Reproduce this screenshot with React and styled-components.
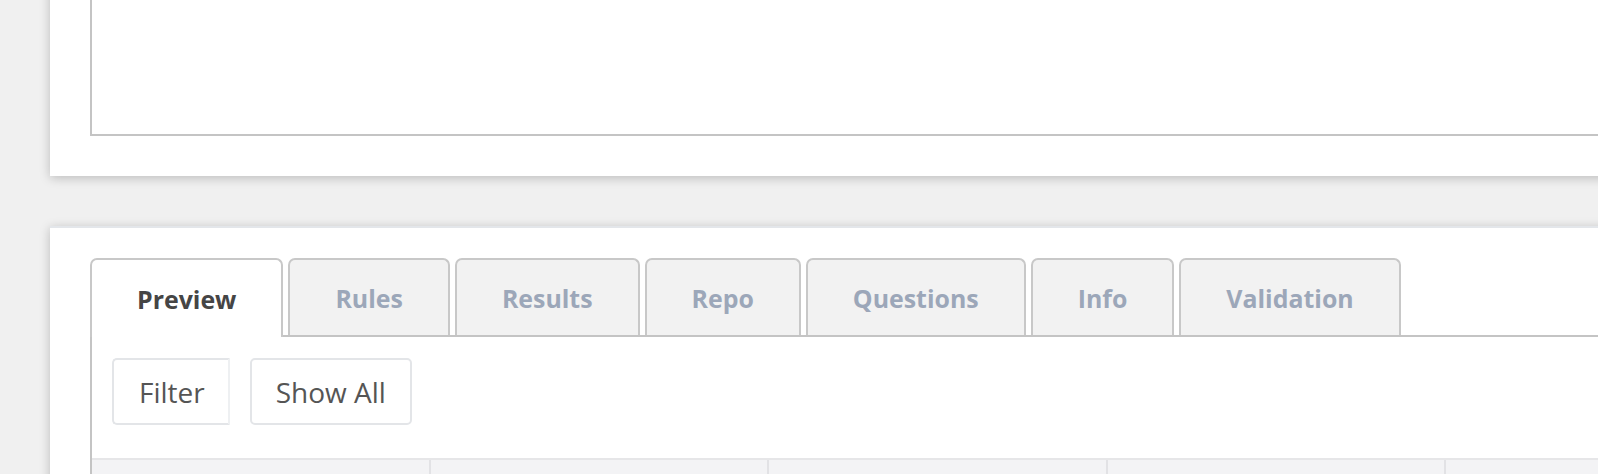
import React, { useState } from "react";
import styled, { createGlobalStyle, css } from "styled-components";

const GlobalStyle = createGlobalStyle`
  *, *::before, *::after { box-sizing: border-box; }
  html, body {
    margin: 0;
    padding: 0;
    background: #f0f0f0;
    overflow: hidden;
    font-family: "Open Sans", "Liberation Sans", sans-serif;
  }
`;

// page is scrolled: the top card starts above the viewport
const Page = styled.div`
  margin-top: -200px;
  padding-left: 50px;
  margin-right: -120px;
  display: flex;
  flex-direction: column;
  gap: 50px;
`;

const Card = styled.section`
  background: #fff;
  box-shadow: 0 2px 10px rgba(0, 0, 0, 0.22);
  padding: ${(props) => props.$padding};
  ${(props) =>
    props.$topLine &&
    css`
      border-top: 2px solid #e3e6ea;
    `}
`;

const EditorBox = styled.div`
  height: 296px;
  border: 2px solid #c4c4c4;
  background: #fff;
`;

const TabList = styled.div`
  display: flex;
  align-items: flex-end;
  gap: 5px;
  border-bottom: 2px solid #c4c4c4;
`;

const Tab = styled.button`
  height: 77px;
  padding: 0 45px;
  border: 2px solid #c8c8c8;
  border-bottom: none;
  border-radius: 7px 7px 0 0;
  background: #f2f2f2;
  color: #9ca7b9;
  font-family: "Open Sans", "Liberation Sans", sans-serif;
  font-size: 24.9px;
  font-weight: 700;
  display: flex;
  align-items: center;
  justify-content: center;
  cursor: pointer;
  ${(props) =>
    props.$active &&
    css`
      height: 79px;
      margin-bottom: -2px;
      background: #fff;
      color: #454545;
      position: relative;
      z-index: 1;
    `}
`;

const Panel = styled.div`
  border-left: 2px solid #c4c4c4;
`;

const Toolbar = styled.div`
  display: flex;
  gap: 20px;
  padding: 21px 20px 33px;
`;

const ToolButton = styled.button`
  height: 67px;
  padding: 0 24px;
  border: 2px solid #e3e5e8;
  border-radius: 5px;
  background: #fff;
  color: #555;
  font-family: "Open Sans", "Liberation Sans", sans-serif;
  font-size: 28px;
  font-weight: 400;
  cursor: pointer;
  ${(props) =>
    props.$clipped &&
    css`
      border-right-color: #eef0f2;
      border-radius: 5px 0 0 5px;
      padding: 0 23px 0 25px;
    `}
`;

const TableHead = styled.div`
  display: grid;
  grid-template-columns: repeat(5, 338.5px);
  border-top: 2px solid #e6e6e8;
  background: #f3f3f5;
  height: 60px;
`;

const HeadCell = styled.div`
  border-right: 2px solid #e2e2e5;
`;

const tabs = ["Preview", "Rules", "Results", "Repo", "Questions", "Info", "Validation"];

export default function App() {
  const [active, setActive] = useState("Preview");

  return (
    <>
      <GlobalStyle />
      <Page>
        <Card $padding="40px">
          <EditorBox />
        </Card>

        <Card $padding="30px 40px 0" $topLine>
          <TabList>
            {tabs.map((t) => (
              <Tab key={t} $active={t === active} onClick={() => setActive(t)}>
                {t}
              </Tab>
            ))}
          </TabList>
          <Panel>
            <Toolbar>
              <ToolButton $clipped>Filter</ToolButton>
              <ToolButton>Show All</ToolButton>
            </Toolbar>
            <TableHead>
              {[0, 1, 2, 3, 4].map((i) => (
                <HeadCell key={i} />
              ))}
            </TableHead>
          </Panel>
        </Card>
      </Page>
    </>
  );
}
